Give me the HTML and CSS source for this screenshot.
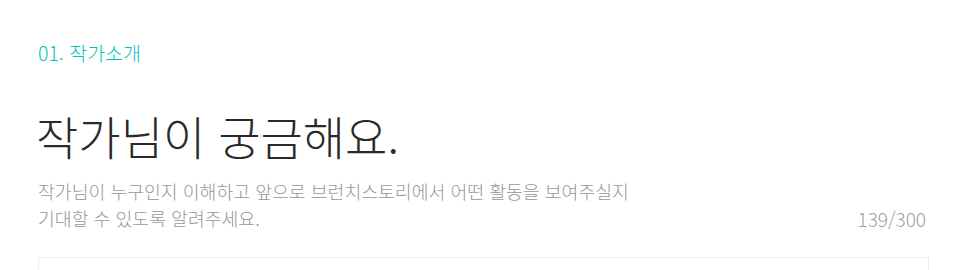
FILE: index.html
```html
<!DOCTYPE html>
<html lang="ko">
<head>
    <meta charset="UTF-8">
    <meta name="viewport" content="width=device-width, initial-scale=1.0">
    <title>작가소개</title>
    <link rel="stylesheet" href="styles.css">
</head>
<body>
    <div class="section">
        <div class="step">01. 작가소개</div>
        <h1 class="title">작가님이 궁금해요.</h1>
        <div class="desc-row">
            <p class="desc">작가님이 누구인지 이해하고 앞으로 브런치스토리에서 어떤 활동을 보여주실지<br>기대할 수 있도록 알려주세요.</p>
            <span class="count">139/300</span>
        </div>
        <div class="editor"></div>
    </div>
</body>
</html>
```

FILE: styles.css
```css
body {
    margin: 0;
    padding: 0;
    background: #fff;
    font-family: "Noto Sans CJK KR", "Noto Sans", sans-serif;
}
.section {
    width: 891px;
    padding: 39px 0 0 38px;
}
.step {
    color: #00c3bd;
    font-size: 19.5px;
    line-height: 28px;
    font-weight: 300;
}
.title {
    margin: 40px 0 0 -2px;
    font-size: 46px;
    line-height: 56px;
    font-weight: 300;
    color: #2a2a2a;
}
.desc-row {
    display: flex;
    justify-content: space-between;
    align-items: flex-end;
    margin-top: 15px;
}
.desc {
    margin: 0;
    font-size: 18.3px;
    line-height: 27px;
    color: #969696;
    font-weight: 300;
}
.count {
    font-size: 19px;
    line-height: 27px;
    color: #a0a0a0;
    padding-right: 3px;
    font-weight: 300;
}
.editor {
    margin-top: 25px;
    height: 40px;
    border: 1px solid #eee;
    border-bottom: none;
}
```
